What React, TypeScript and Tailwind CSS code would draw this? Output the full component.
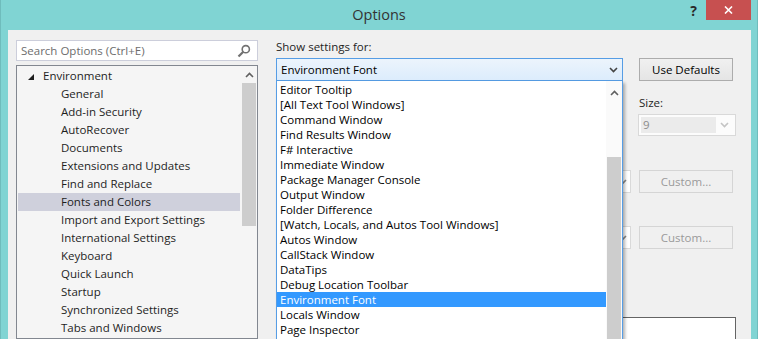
import React from 'react';

const treeItems = [
  'General',
  'Add-in Security',
  'AutoRecover',
  'Documents',
  'Extensions and Updates',
  'Find and Replace',
  'Fonts and Colors',
  'Import and Export Settings',
  'International Settings',
  'Keyboard',
  'Quick Launch',
  'Startup',
  'Synchronized Settings',
  'Tabs and Windows',
];

const listItems = [
  'Editor Tooltip',
  '[All Text Tool Windows]',
  'Command Window',
  'Find Results Window',
  'F# Interactive',
  'Immediate Window',
  'Package Manager Console',
  'Output Window',
  'Folder Difference',
  '[Watch, Locals, and Autos Tool Windows]',
  'Autos Window',
  'CallStack Window',
  'DataTips',
  'Debug Location Toolbar',
  'Environment Font',
  'Locals Window',
  'Page Inspector',
];

function ChevronDown({ color = '#444' }: { color?: string }) {
  return (
    <svg width="9" height="6" viewBox="0 0 9 6">
      <path d="M1 1 L4.5 4.5 L8 1" fill="none" stroke={color} strokeWidth="1.6" />
    </svg>
  );
}

function ChevronUp({ color = '#606060' }: { color?: string }) {
  return (
    <svg width="9" height="6" viewBox="0 0 9 6">
      <path d="M1 5 L4.5 1.5 L8 5" fill="none" stroke={color} strokeWidth="1.6" />
    </svg>
  );
}

export default function App() {
  return (
    <div className="w-[758px] h-[339px] overflow-hidden flex flex-col bg-[#80d4d3] border-l border-r border-[#6fbcbc] font-['Open_Sans',sans-serif] text-[11.5px] text-[#1e1e1e]">
      {/* title bar */}
      <div className="h-[30px] shrink-0 grid grid-cols-[1fr_auto_1fr]">
        <div />
        <div className="text-[14.5px] text-[#333] leading-[30px]">Options</div>
        <div className="flex justify-end items-start pr-[6px]">
          <span className="mt-[2px] text-[14px] font-bold text-[#2a2a2a] leading-[18px]">?</span>
          <button className="ml-[9px] w-[45px] h-[20px] bg-[#c75050] flex items-center justify-center">
            <svg width="9" height="8" viewBox="0 0 9 8">
              <path d="M1 0.5 L8 7.5 M8 0.5 L1 7.5" stroke="#fff" strokeWidth="1.6" />
            </svg>
          </button>
        </div>
      </div>

      {/* client */}
      <div className="flex-1 min-h-0 ml-[7px] mr-[6px] bg-[#f0f0f0] flex">
        {/* left column */}
        <div className="ml-[8px] mt-[10px] w-[242px] flex flex-col">
          <div className="h-[21px] bg-white border border-[#cccedb] flex items-center pl-[4px] pr-[6px]">
            <span className="flex-1 text-[#6d6d6d] leading-[16px]">Search Options (Ctrl+E)</span>
            <svg width="14" height="14" viewBox="0 0 14 14">
              <circle cx="8.8" cy="5.2" r="3.6" fill="none" stroke="#717171" strokeWidth="1.6" />
              <path d="M6.3 7.7 L1.5 12.5" stroke="#717171" strokeWidth="2.2" />
            </svg>
          </div>
          <div className="mt-[4px] flex-1 border border-[#828790] bg-[#f5f5f5] flex">
            <div className="flex-1 pt-[1px] pl-[1px]">
              <div className="h-[18px] flex items-center">
                <svg width="6" height="6" viewBox="0 0 6 6" className="ml-[10px] mt-[1px]">
                  <polygon points="6,0 6,6 0,6" fill="#1e1e1e" />
                </svg>
                <span className="ml-[9px] leading-[18px]">Environment</span>
              </div>
              {treeItems.map((t) => (
                <div
                  key={t}
                  className={
                    'h-[18px] leading-[18px] pl-[43px] whitespace-nowrap ' +
                    (t === 'Fonts and Colors' ? 'bg-[#cfd0dc] mr-[1px]' : '')
                  }
                >
                  {t}
                </div>
              ))}
            </div>
            <div className="w-[16px] flex flex-col items-center">
              <div className="h-[17px] flex items-center justify-center">
                <ChevronUp />
              </div>
              <div className="w-[14px] h-[143px] bg-[#cdcdcd]" />
            </div>
          </div>
        </div>

        {/* right column */}
        <div className="relative ml-[18px] flex-1 pt-[9px]">
          <div className="h-[16px] leading-[16px]">Show settings for:</div>
          <div className="mt-[3px] flex">
            <div className="w-[347px] h-[23px] border border-[#569de5] bg-gradient-to-b from-[#ecf4fc] to-[#dcecfc] flex items-center pl-[4px] pr-[4px]">
              <span className="flex-1 text-black">Environment Font</span>
              <ChevronDown />
            </div>
            <button className="ml-[16px] w-[94px] h-[23px] border border-[#acacac] bg-gradient-to-b from-[#f0f0f0] to-[#e5e5e5] text-black">
              Use Defaults
            </button>
          </div>

          {/* font / size row (font combo sits under the open list) */}
          <div className="mt-[14px] flex">
            <div className="w-[355px]" />
            <div className="ml-[7px] w-[98px]">
              <div className="h-[16px] leading-[16px] pl-[1px]">Size:</div>
              <div className="mt-[3px] h-[22px] border border-[#d9d9d9] bg-[#fcfcfc] flex items-center p-[2px]">
                <div className="w-[75px] h-[16px] bg-[#ebebeb] text-[#8d8d8d] leading-[16px] pl-[2px]">9</div>
                <div className="flex-1 flex justify-center">
                  <ChevronDown color="#c4c4c4" />
                </div>
              </div>
            </div>
          </div>

          {/* foreground / background rows */}
          <div className="mt-[34px] flex items-center">
            <div className="w-[355px] h-[23px] border border-[#d9d9d9] bg-white flex items-center justify-end pr-[3px]">
              <ChevronDown color="#8a8a8a" />
            </div>
            <button className="ml-[8px] w-[94px] h-[23px] border border-[#d5d5d5] bg-[#f0f0f0] text-[#9a9a9a]">
              Custom...
            </button>
          </div>
          <div className="mt-[33px] flex items-center">
            <div className="w-[355px] h-[23px] border border-[#d9d9d9] bg-white flex items-center justify-end pr-[3px]">
              <ChevronDown color="#8a8a8a" />
            </div>
            <button className="ml-[8px] w-[94px] h-[23px] border border-[#d5d5d5] bg-[#f0f0f0] text-[#9a9a9a]">
              Custom...
            </button>
          </div>

          {/* preview */}
          <div className="mt-[68px] w-[460px] h-[40px] border border-[#646464] bg-white" />

          {/* open dropdown */}
          <div className="absolute left-0 top-[51px] w-[347px] h-[300px] bg-white border-l border-r border-[#569de5] shadow-[2px_2px_3px_rgba(0,0,0,0.3)] flex z-10">
            <div className="flex-1 pt-[1px]">
              {listItems.map((t) => (
                <div
                  key={t}
                  className={
                    'h-[15px] leading-[15px] pl-[3px] whitespace-nowrap ' +
                    (t === 'Environment Font' ? 'bg-[#3399ff] text-white' : 'text-black')
                  }
                >
                  {t}
                </div>
              ))}
            </div>
            <div className="w-[16px] bg-[#fafafa] flex flex-col items-center">
              <div className="h-[22px] flex items-center justify-center pt-[2px]">
                <ChevronUp />
              </div>
              <div className="mt-[54px] w-[14px] flex-1 bg-[#cdcdcd]" />
            </div>
          </div>
        </div>
      </div>
    </div>
  );
}
